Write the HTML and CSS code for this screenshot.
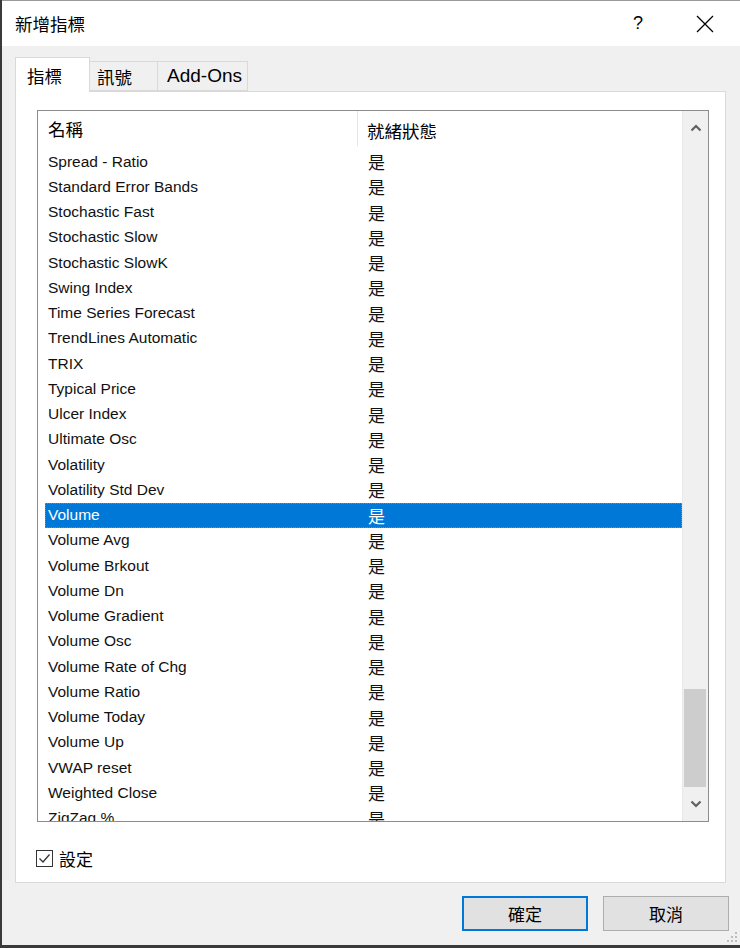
FILE: index.html
```html
<!DOCTYPE html>
<html lang="zh-Hant">
<head>
<meta charset="utf-8">
<title>新增指標</title>
<link rel="stylesheet" href="styles.css">
</head>
<body>
<div class="window">
  <div class="titlebar">
    <span class="title">新增指標</span>
    <span class="help">?</span>
    <span class="close">
      <svg width="18" height="18" viewBox="0 0 18 18"><path d="M1 1 L17 17 M17 1 L1 17" stroke="#000" stroke-width="1.3" fill="none"/></svg>
    </span>
  </div>
  <div class="client">
    <div class="tabs">
      <div class="tab active">指標</div>
      <div class="tab second">訊號</div>
      <div class="tab latin">Add-Ons</div>
    </div>
    <div class="panel">
      <div class="listbox">
        <div class="listmain">
          <div class="header">
            <div class="hcell c1">名稱</div>
            <div class="hcell c2">就緒狀態</div>
          </div>
          <div class="rows">
            <div class="row"><span class="c1">Spread - Ratio</span><span class="c2">是</span></div>
            <div class="row"><span class="c1">Standard Error Bands</span><span class="c2">是</span></div>
            <div class="row"><span class="c1">Stochastic Fast</span><span class="c2">是</span></div>
            <div class="row"><span class="c1">Stochastic Slow</span><span class="c2">是</span></div>
            <div class="row"><span class="c1">Stochastic SlowK</span><span class="c2">是</span></div>
            <div class="row"><span class="c1">Swing Index</span><span class="c2">是</span></div>
            <div class="row"><span class="c1">Time Series Forecast</span><span class="c2">是</span></div>
            <div class="row"><span class="c1">TrendLines Automatic</span><span class="c2">是</span></div>
            <div class="row"><span class="c1">TRIX</span><span class="c2">是</span></div>
            <div class="row"><span class="c1">Typical Price</span><span class="c2">是</span></div>
            <div class="row"><span class="c1">Ulcer Index</span><span class="c2">是</span></div>
            <div class="row"><span class="c1">Ultimate Osc</span><span class="c2">是</span></div>
            <div class="row"><span class="c1">Volatility</span><span class="c2">是</span></div>
            <div class="row"><span class="c1">Volatility Std Dev</span><span class="c2">是</span></div>
            <div class="row selected"><span class="c1">Volume</span><span class="c2">是</span></div>
            <div class="row"><span class="c1">Volume Avg</span><span class="c2">是</span></div>
            <div class="row"><span class="c1">Volume Brkout</span><span class="c2">是</span></div>
            <div class="row"><span class="c1">Volume Dn</span><span class="c2">是</span></div>
            <div class="row"><span class="c1">Volume Gradient</span><span class="c2">是</span></div>
            <div class="row"><span class="c1">Volume Osc</span><span class="c2">是</span></div>
            <div class="row"><span class="c1">Volume Rate of Chg</span><span class="c2">是</span></div>
            <div class="row"><span class="c1">Volume Ratio</span><span class="c2">是</span></div>
            <div class="row"><span class="c1">Volume Today</span><span class="c2">是</span></div>
            <div class="row"><span class="c1">Volume Up</span><span class="c2">是</span></div>
            <div class="row"><span class="c1">VWAP reset</span><span class="c2">是</span></div>
            <div class="row"><span class="c1">Weighted Close</span><span class="c2">是</span></div>
            <div class="row"><span class="c1">ZigZag %</span><span class="c2">是</span></div>
          </div>
        </div>
        <div class="scrollbar">
          <div class="arrow">
            <svg width="12" height="8" viewBox="0 0 12 8"><path d="M1.5 6.5 L6 2 L10.5 6.5" stroke="#606060" stroke-width="2.2" fill="none"/></svg>
          </div>
          <div class="track">
            <div class="thumb"></div>
          </div>
          <div class="arrow">
            <svg width="12" height="8" viewBox="0 0 12 8"><path d="M1.5 1.5 L6 6 L10.5 1.5" stroke="#606060" stroke-width="2.2" fill="none"/></svg>
          </div>
        </div>
      </div>
      <label class="check">
        <span class="box">
          <svg width="17" height="17" viewBox="0 0 17 17"><rect x="0.5" y="0.5" width="16" height="16" fill="#fff" stroke="#333"/><path d="M3.5 8.5 L7 12 L13.5 4.5" stroke="#333" stroke-width="1.3" fill="none"/></svg>
        </span>
        <span class="label">設定</span>
      </label>
    </div>
    <div class="buttons">
      <div class="btn default">確定</div>
      <div class="btn">取消</div>
    </div>
    <div class="grip">
      <svg width="12" height="12" viewBox="0 0 12 12" fill="#bdbdbd"><rect x="9" y="1" width="2" height="2"/><rect x="5" y="5" width="2" height="2"/><rect x="9" y="5" width="2" height="2"/><rect x="1" y="9" width="2" height="2"/><rect x="5" y="9" width="2" height="2"/><rect x="9" y="9" width="2" height="2"/></svg>
    </div>
  </div>
</div>
</body>
</html>
```
FILE: styles.css
```css
* { box-sizing: border-box; }
html, body { margin: 0; padding: 0; }
body {
  background: #3a3a3a;
  width: 740px;
  height: 948px;
  overflow: hidden;
  font-family: "Liberation Sans", "Noto Sans CJK TC", sans-serif;
  color: #000;
}
.window {
  margin-left: 2px;
  width: 738px;
  height: 945px;
  display: flex;
  flex-direction: column;
  background: #f0f0f0;
}
.titlebar {
  height: 46px;
  background: #fff;
  display: flex;
  align-items: center;
  padding-left: 13px;
  border-top: 1px solid #9a9a9a;
}
.title {
  font-family: "Noto Sans CJK TC", sans-serif;
  font-size: 17.5px;
  flex: 1;
}
.help {
  font-family: "Liberation Sans", sans-serif;
  font-size: 18px;
  width: 20px;
  margin-right: 48px;
  text-align: center;
}
.close {
  width: 18px;
  height: 18px;
  margin-right: 26px;
  display: flex;
}
.client {
  flex: 1;
  display: flex;
  flex-direction: column;
  padding: 11px 11px 0 13px;
  position: relative;
}
.tabs {
  display: flex;
  align-items: flex-end;
  height: 34px;
  position: relative;
  z-index: 1;
}
.tab {
  font-family: "Noto Sans CJK TC", sans-serif;
  font-size: 17.5px;
  height: 30px;
  display: flex;
  align-items: center;
  background: #f0f0f0;
  border: 1px solid #d9d9d9;
  border-left: none;
  padding-top: 1px;
}
.tab.second {
  width: 68px;
  padding-left: 7px;
}
.tab.latin {
  width: 90px;
  font-family: "Liberation Sans", sans-serif;
  font-size: 19px;
  padding-left: 9px;
  padding-top: 0;
}
.tab.active {
  width: 75px;
  background: #fff;
  height: 35px;
  margin-bottom: -1px;
  border-left: 1px solid #d9d9d9;
  border-bottom: none;
  padding-left: 11px;
  padding-top: 0;
}
.panel {
  height: 792px;
  width: 711px;
  background: #fff;
  border: 1px solid #d9d9d9;
  padding: 18px 0 0 21px;
  display: flex;
  flex-direction: column;
}
.listbox {
  width: 672px;
  height: 712px;
  border: 1px solid #8c8c8c;
  display: flex;
  overflow: hidden;
}
.listmain {
  flex: 1;
  display: flex;
  flex-direction: column;
  overflow: hidden;
}
.header {
  height: 38px;
  display: flex;
  flex-shrink: 0;
}
.hcell {
  font-family: "Noto Sans CJK TC", sans-serif;
  font-size: 17.5px;
  display: flex;
  align-items: center;
}
.c1 { width: 320px; padding-left: 10px; flex-shrink: 0; }
.c2 { padding-left: 9px; }
.hcell.c1 { border-right: 1px solid #e5e5e5; height: 35px; }
.rows {
  overflow: hidden;
  padding-left: 7px;
}
.row {
  height: 25.25px;
  display: flex;
  align-items: center;
  font-size: 15.5px;
  color: #111;
  white-space: nowrap;
}
.row .c1 { width: 313px; padding-left: 3px; }
.row .c2 {
  font-family: "Noto Sans CJK TC", sans-serif;
  font-size: 17px;
  padding-left: 10px;
}
.row.selected {
  background: #0078d7;
  color: #fff;
  outline: 1px dotted #7a8a99;
  outline-offset: -1px;
}
.scrollbar {
  width: 26px;
  background: #f0f0f0;
  display: flex;
  flex-direction: column;
  border-left: 1px solid #e8e8e8;
}
.arrow {
  height: 34px;
  display: flex;
  align-items: center;
  justify-content: center;
  flex-shrink: 0;
}
.track {
  flex: 1;
  display: flex;
  flex-direction: column;
  justify-content: flex-end;
  padding: 0 2px 0 1px;
}
.thumb {
  height: 98px;
  background: #cdcdcd;
}
.check {
  display: flex;
  align-items: center;
  margin-top: 24px;
  margin-left: -1px;
}
.box { width: 17px; height: 17px; display: flex; }
.label {
  font-family: "Noto Sans CJK TC", sans-serif;
  font-size: 17px;
  margin-left: 6px;
}
.buttons {
  display: flex;
  justify-content: flex-end;
  gap: 15px;
  margin-top: 13px;
  padding-right: 0;
}
.btn {
  width: 126px;
  height: 35px;
  background: #e1e1e1;
  border: 1px solid #adadad;
  display: flex;
  align-items: center;
  justify-content: center;
  font-family: "Noto Sans CJK TC", sans-serif;
  font-size: 17px;
}
.btn.default {
  border: 2px solid #0078d7;
}
.grip {
  position: absolute;
  right: 2px;
  bottom: 2px;
  width: 12px;
  height: 12px;
  display: flex;
}
```
